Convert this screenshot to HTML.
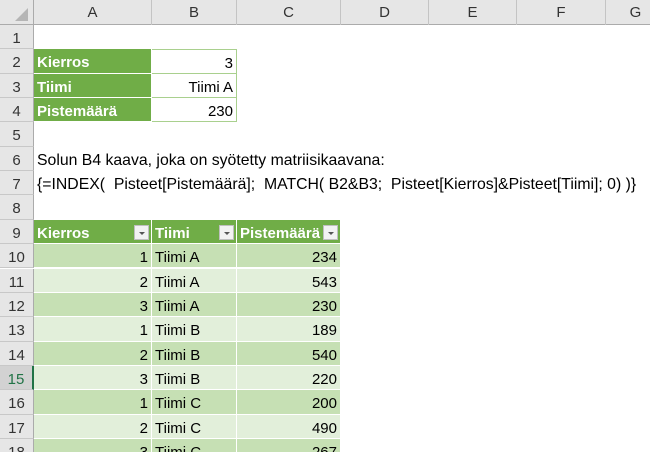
<!DOCTYPE html>
<html><head><meta charset="utf-8"><style>
*{margin:0;padding:0;box-sizing:border-box}
html,body{width:650px;height:452px;overflow:hidden}
body{background:#fff;font-family:"Liberation Sans",Arial,sans-serif;font-size:15px;color:#000;position:relative}
.hdr{position:absolute;left:0;top:0;width:650px;height:25px;background:#e6e6e6;border-bottom:1px solid #ababab}
.ch{position:absolute;top:0;height:25px;line-height:26px;text-align:center;color:#333;font-size:15px;border-right:1px solid #c4c4c4}
.rh{position:absolute;left:0;width:34px;height:24.35px;line-height:27px;text-align:center;background:#e6e6e6;color:#333;border-bottom:1px solid #c8c8c8;border-right:1px solid #ababab;font-size:15px}
.c{position:absolute;height:24.35px;line-height:27px;padding:0 3px;white-space:nowrap;overflow:hidden}
.r{text-align:right}
.hg{background:#70ad47;color:#fff;font-weight:bold;border-right:1px solid #fff;border-bottom:1px solid #fff}
.b1{background:#c6e0b4;border-right:1px solid #fff;border-bottom:1px solid #fff}
.b2{background:#e2efda;border-right:1px solid #fff;border-bottom:1px solid #fff}
.wb{background:#fff;border:1px solid #a9d08e;border-left:none}
.fb{position:absolute;right:2px;top:5px;width:15px;height:15px;background:#f2f2f2;border:1px solid #bfbfbf}
.fb:after{content:"";position:absolute;left:4px;top:6px;border-left:3px solid transparent;border-right:3px solid transparent;border-top:3px solid #555}
.wide{overflow:visible;font-size:15.8px}
</style></head><body>
<div class="hdr"></div>
<div class="ch" style="left:0;width:34px;border-right:1px solid #ababab"><svg width="34" height="25"><polygon points="28,8 28,21 15,21" fill="#b5b5b5"/></svg></div>
<div class="ch" style="left:34px;width:118px">A</div>
<div class="ch" style="left:152px;width:85px">B</div>
<div class="ch" style="left:237px;width:104px">C</div>
<div class="ch" style="left:341px;width:88px">D</div>
<div class="ch" style="left:429px;width:88px">E</div>
<div class="ch" style="left:517px;width:89px">F</div>
<div class="ch" style="left:606px;width:60px">G</div>

<div class="rh" style="top:25px">1</div>
<div class="rh" style="top:49.35px">2</div>
<div class="rh" style="top:73.7px">3</div>
<div class="rh" style="top:98.05px">4</div>
<div class="rh" style="top:122.4px">5</div>
<div class="rh" style="top:146.75px">6</div>
<div class="rh" style="top:171.1px">7</div>
<div class="rh" style="top:195.45px">8</div>
<div class="rh" style="top:219.8px">9</div>
<div class="rh" style="top:244.15px">10</div>
<div class="rh" style="top:268.5px">11</div>
<div class="rh" style="top:292.85px">12</div>
<div class="rh" style="top:317.2px">13</div>
<div class="rh" style="top:341.55px">14</div>
<div class="rh" style="top:365.9px;background:#d2d2d2;color:#217346;border-right:2px solid #217346">15</div>
<div class="rh" style="top:390.25px">16</div>
<div class="rh" style="top:414.6px">17</div>
<div class="rh" style="top:438.95px">18</div>

<div class="c hg" style="left:34px;top:49.35px;width:118px">Kierros</div>
<div class="c hg" style="left:34px;top:73.7px;width:118px">Tiimi</div>
<div class="c hg" style="left:34px;top:98.05px;width:118px">Pistemäärä</div>
<div class="c wb r" style="left:152px;top:49.35px;width:85px">3</div>
<div class="c wb r" style="left:152px;top:73.7px;width:85px;border-top:none">Tiimi A</div>
<div class="c wb r" style="left:152px;top:98.05px;width:85px;border-top:none">230</div>

<div class="c wide" style="left:34px;top:146.75px">Solun B4 kaava, joka on syötetty matriisikaavana:</div>
<div class="c wide" style="left:34px;top:171.1px">{=INDEX(&nbsp; Pisteet[Pistemäärä];&nbsp; MATCH( B2&amp;B3;&nbsp; Pisteet[Kierros]&amp;Pisteet[Tiimi]; 0) )}</div>

<div class="c hg" style="left:34px;top:219.8px;width:118px">Kierros<span class="fb"></span></div>
<div class="c hg" style="left:152px;top:219.8px;width:85px">Tiimi<span class="fb"></span></div>
<div class="c hg" style="left:237px;top:219.8px;width:104px">Pistemäärä<span class="fb"></span></div>

<div class="c b1 r" style="left:34px;top:244.15px;width:118px">1</div><div class="c b1" style="left:152px;top:244.15px;width:85px">Tiimi A</div><div class="c b1 r" style="left:237px;top:244.15px;width:104px">234</div>
<div class="c b2 r" style="left:34px;top:268.5px;width:118px">2</div><div class="c b2" style="left:152px;top:268.5px;width:85px">Tiimi A</div><div class="c b2 r" style="left:237px;top:268.5px;width:104px">543</div>
<div class="c b1 r" style="left:34px;top:292.85px;width:118px">3</div><div class="c b1" style="left:152px;top:292.85px;width:85px">Tiimi A</div><div class="c b1 r" style="left:237px;top:292.85px;width:104px">230</div>
<div class="c b2 r" style="left:34px;top:317.2px;width:118px">1</div><div class="c b2" style="left:152px;top:317.2px;width:85px">Tiimi B</div><div class="c b2 r" style="left:237px;top:317.2px;width:104px">189</div>
<div class="c b1 r" style="left:34px;top:341.55px;width:118px">2</div><div class="c b1" style="left:152px;top:341.55px;width:85px">Tiimi B</div><div class="c b1 r" style="left:237px;top:341.55px;width:104px">540</div>
<div class="c b2 r" style="left:34px;top:365.9px;width:118px">3</div><div class="c b2" style="left:152px;top:365.9px;width:85px">Tiimi B</div><div class="c b2 r" style="left:237px;top:365.9px;width:104px">220</div>
<div class="c b1 r" style="left:34px;top:390.25px;width:118px">1</div><div class="c b1" style="left:152px;top:390.25px;width:85px">Tiimi C</div><div class="c b1 r" style="left:237px;top:390.25px;width:104px">200</div>
<div class="c b2 r" style="left:34px;top:414.6px;width:118px">2</div><div class="c b2" style="left:152px;top:414.6px;width:85px">Tiimi C</div><div class="c b2 r" style="left:237px;top:414.6px;width:104px">490</div>
<div class="c b1 r" style="left:34px;top:438.95px;width:118px">3</div><div class="c b1" style="left:152px;top:438.95px;width:85px">Tiimi C</div><div class="c b1 r" style="left:237px;top:438.95px;width:104px">267</div>
</body></html>
